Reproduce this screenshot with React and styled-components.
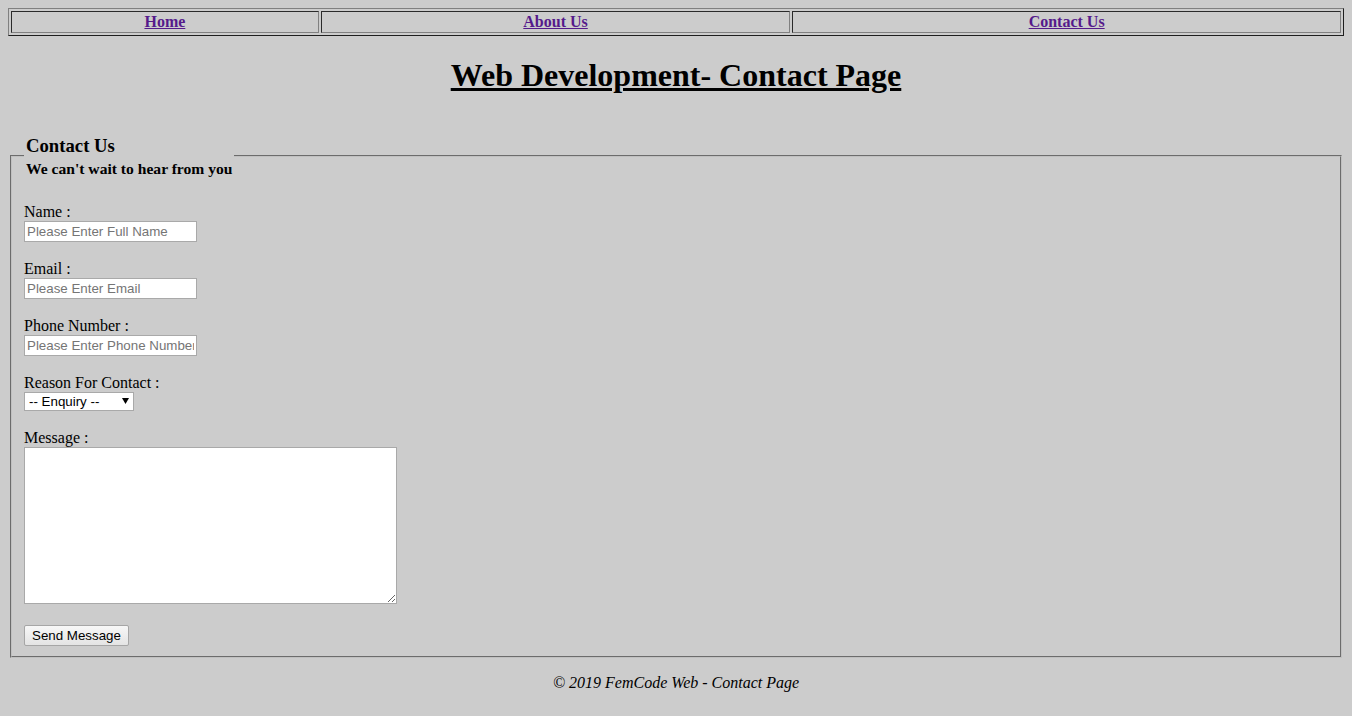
import React from "react";
import styled, { createGlobalStyle } from "styled-components";

const Global = createGlobalStyle`
  html, body { background: #cccccc; }
  body {
    margin: 8px;
    font-family: "Liberation Serif", "Times New Roman", serif;
    font-size: 16px;
    color: #000;
  }
`;

const NavTable = styled.table`
  width: 100%;
  border-collapse: separate;
  border-spacing: 2px;
  border-style: solid;
  border-width: 1px;
  border-color: #808080 #1e1e1e #1e1e1e #808080;
`;

const NavCell = styled.td`
  padding: 1px;
  text-align: center;
  font-weight: bold;
  line-height: 18px;
  border-style: solid;
  border-width: 1px;
  border-color: #2a2a2a #808080 #808080 #2a2a2a;
`;

const NavLink = styled.a`
  color: #551a8b;
  text-decoration: underline;
`;

const Title = styled.h1`
  margin: 21px 0 21px;
  font-size: 32px;
  line-height: 37px;
  text-align: center;
  text-decoration: underline;
  font-weight: bold;
`;

const Fieldset = styled.fieldset`
  margin: 41px 2px 2px;
  padding: 5.6px 12px 10px;
  border: 2px groove rgb(192, 192, 192);
  min-width: 0;
`;

const Legend = styled.legend`
  padding: 0 2px;
`;

const LegendTitle = styled.div`
  font-size: 18.72px;
  font-weight: bold;
  line-height: 21.5px;
`;

const LegendSub = styled.div`
  font-size: 15.6px;
  font-weight: bold;
  line-height: 18px;
  margin-top: 3px;
`;

const Form = styled.form`
  display: flex;
  flex-direction: column;
  align-items: flex-start;
  padding-top: 19px;
`;

const Field = styled.div`
  display: flex;
  flex-direction: column;
  align-items: flex-start;
  margin-bottom: ${(p) => p.$gap ?? 17}px;
`;

const Label = styled.label`
  line-height: 18px;
  padding-top: 1px;
`;

const TextInput = styled.input`
  box-sizing: border-box;
  width: 173px;
  height: 21px;
  padding: 1px 2px;
  border: 1px solid #a9a9a9;
  background: #fff;
  font-family: "Liberation Sans", Arial, sans-serif;
  font-size: 13.333px;
  color: #000;
  outline: none;
  &::placeholder { color: #757575; opacity: 1; }
`;

const SelectWrap = styled.span`
  position: relative;
  display: inline-block;
  width: 110px;
  height: 19px;
`;

const Select = styled.select`
  appearance: none;
  -webkit-appearance: none;
  box-sizing: border-box;
  width: 110px;
  height: 19px;
  margin: 0;
  padding: 0 0 0 4px;
  border: 1px solid #a9a9a9;
  border-radius: 0;
  background: #fff;
  font-family: "Liberation Sans", Arial, sans-serif;
  font-size: 13.333px;
  color: #000;
  outline: none;
`;

const Arrow = styled.svg`
  position: absolute;
  right: 5px;
  top: 6px;
  pointer-events: none;
`;

const TextArea = styled.textarea`
  box-sizing: border-box;
  width: 373px;
  height: 157px;
  margin: 0;
  padding: 2px;
  border: 1px solid #a9a9a9;
  background: #fff;
  font-family: "Liberation Mono", monospace;
  font-size: 13.333px;
  outline: none;
`;

const Button = styled.button`
  box-sizing: border-box;
  height: 21px;
  padding: 1px 7px;
  border: 1px solid #a6a6a6;
  border-radius: 2px;
  background: linear-gradient(#f7f7f7, #e4e4e4);
  font-family: "Liberation Sans", Arial, sans-serif;
  font-size: 13.333px;
  color: #000;
`;

const Footer = styled.p`
  margin: 16px 0;
  text-align: center;
  font-style: italic;
  line-height: 18px;
`;

export default function App() {
  return (
    <>
      <Global />
      <NavTable>
        <tbody>
          <tr>
            <NavCell><NavLink href="#home">Home</NavLink></NavCell>
            <NavCell><NavLink href="#about">About Us</NavLink></NavCell>
            <NavCell><NavLink href="#contact">Contact Us</NavLink></NavCell>
          </tr>
        </tbody>
      </NavTable>
      <Title>Web Development- Contact Page</Title>
      <Fieldset>
        <Legend>
          <LegendTitle>Contact Us</LegendTitle>
          <LegendSub>We can't wait to hear from you</LegendSub>
        </Legend>
        <Form onSubmit={(e) => e.preventDefault()}>
          <Field>
            <Label>Name :</Label>
            <TextInput placeholder="Please Enter Full Name" />
          </Field>
          <Field>
            <Label>Email :</Label>
            <TextInput placeholder="Please Enter Email" />
          </Field>
          <Field>
            <Label>Phone Number :</Label>
            <TextInput placeholder="Please Enter Phone Number" />
          </Field>
          <Field>
            <Label>Reason For Contact :</Label>
            <SelectWrap>
              <Select defaultValue="enquiry">
                <option value="enquiry">-- Enquiry --</option>
                <option value="feedback">Feedback</option>
                <option value="other">Other</option>
              </Select>
              <Arrow width="7" height="6" viewBox="0 0 7 6">
                <path d="M0 0 H7 L3.5 6 Z" fill="#000" />
              </Arrow>
            </SelectWrap>
          </Field>
          <Field $gap={21}>
            <Label>Message :</Label>
            <TextArea />
          </Field>
          <Button type="submit">Send Message</Button>
        </Form>
      </Fieldset>
      <Footer>© 2019 FemCode Web - Contact Page</Footer>
    </>
  );
}
